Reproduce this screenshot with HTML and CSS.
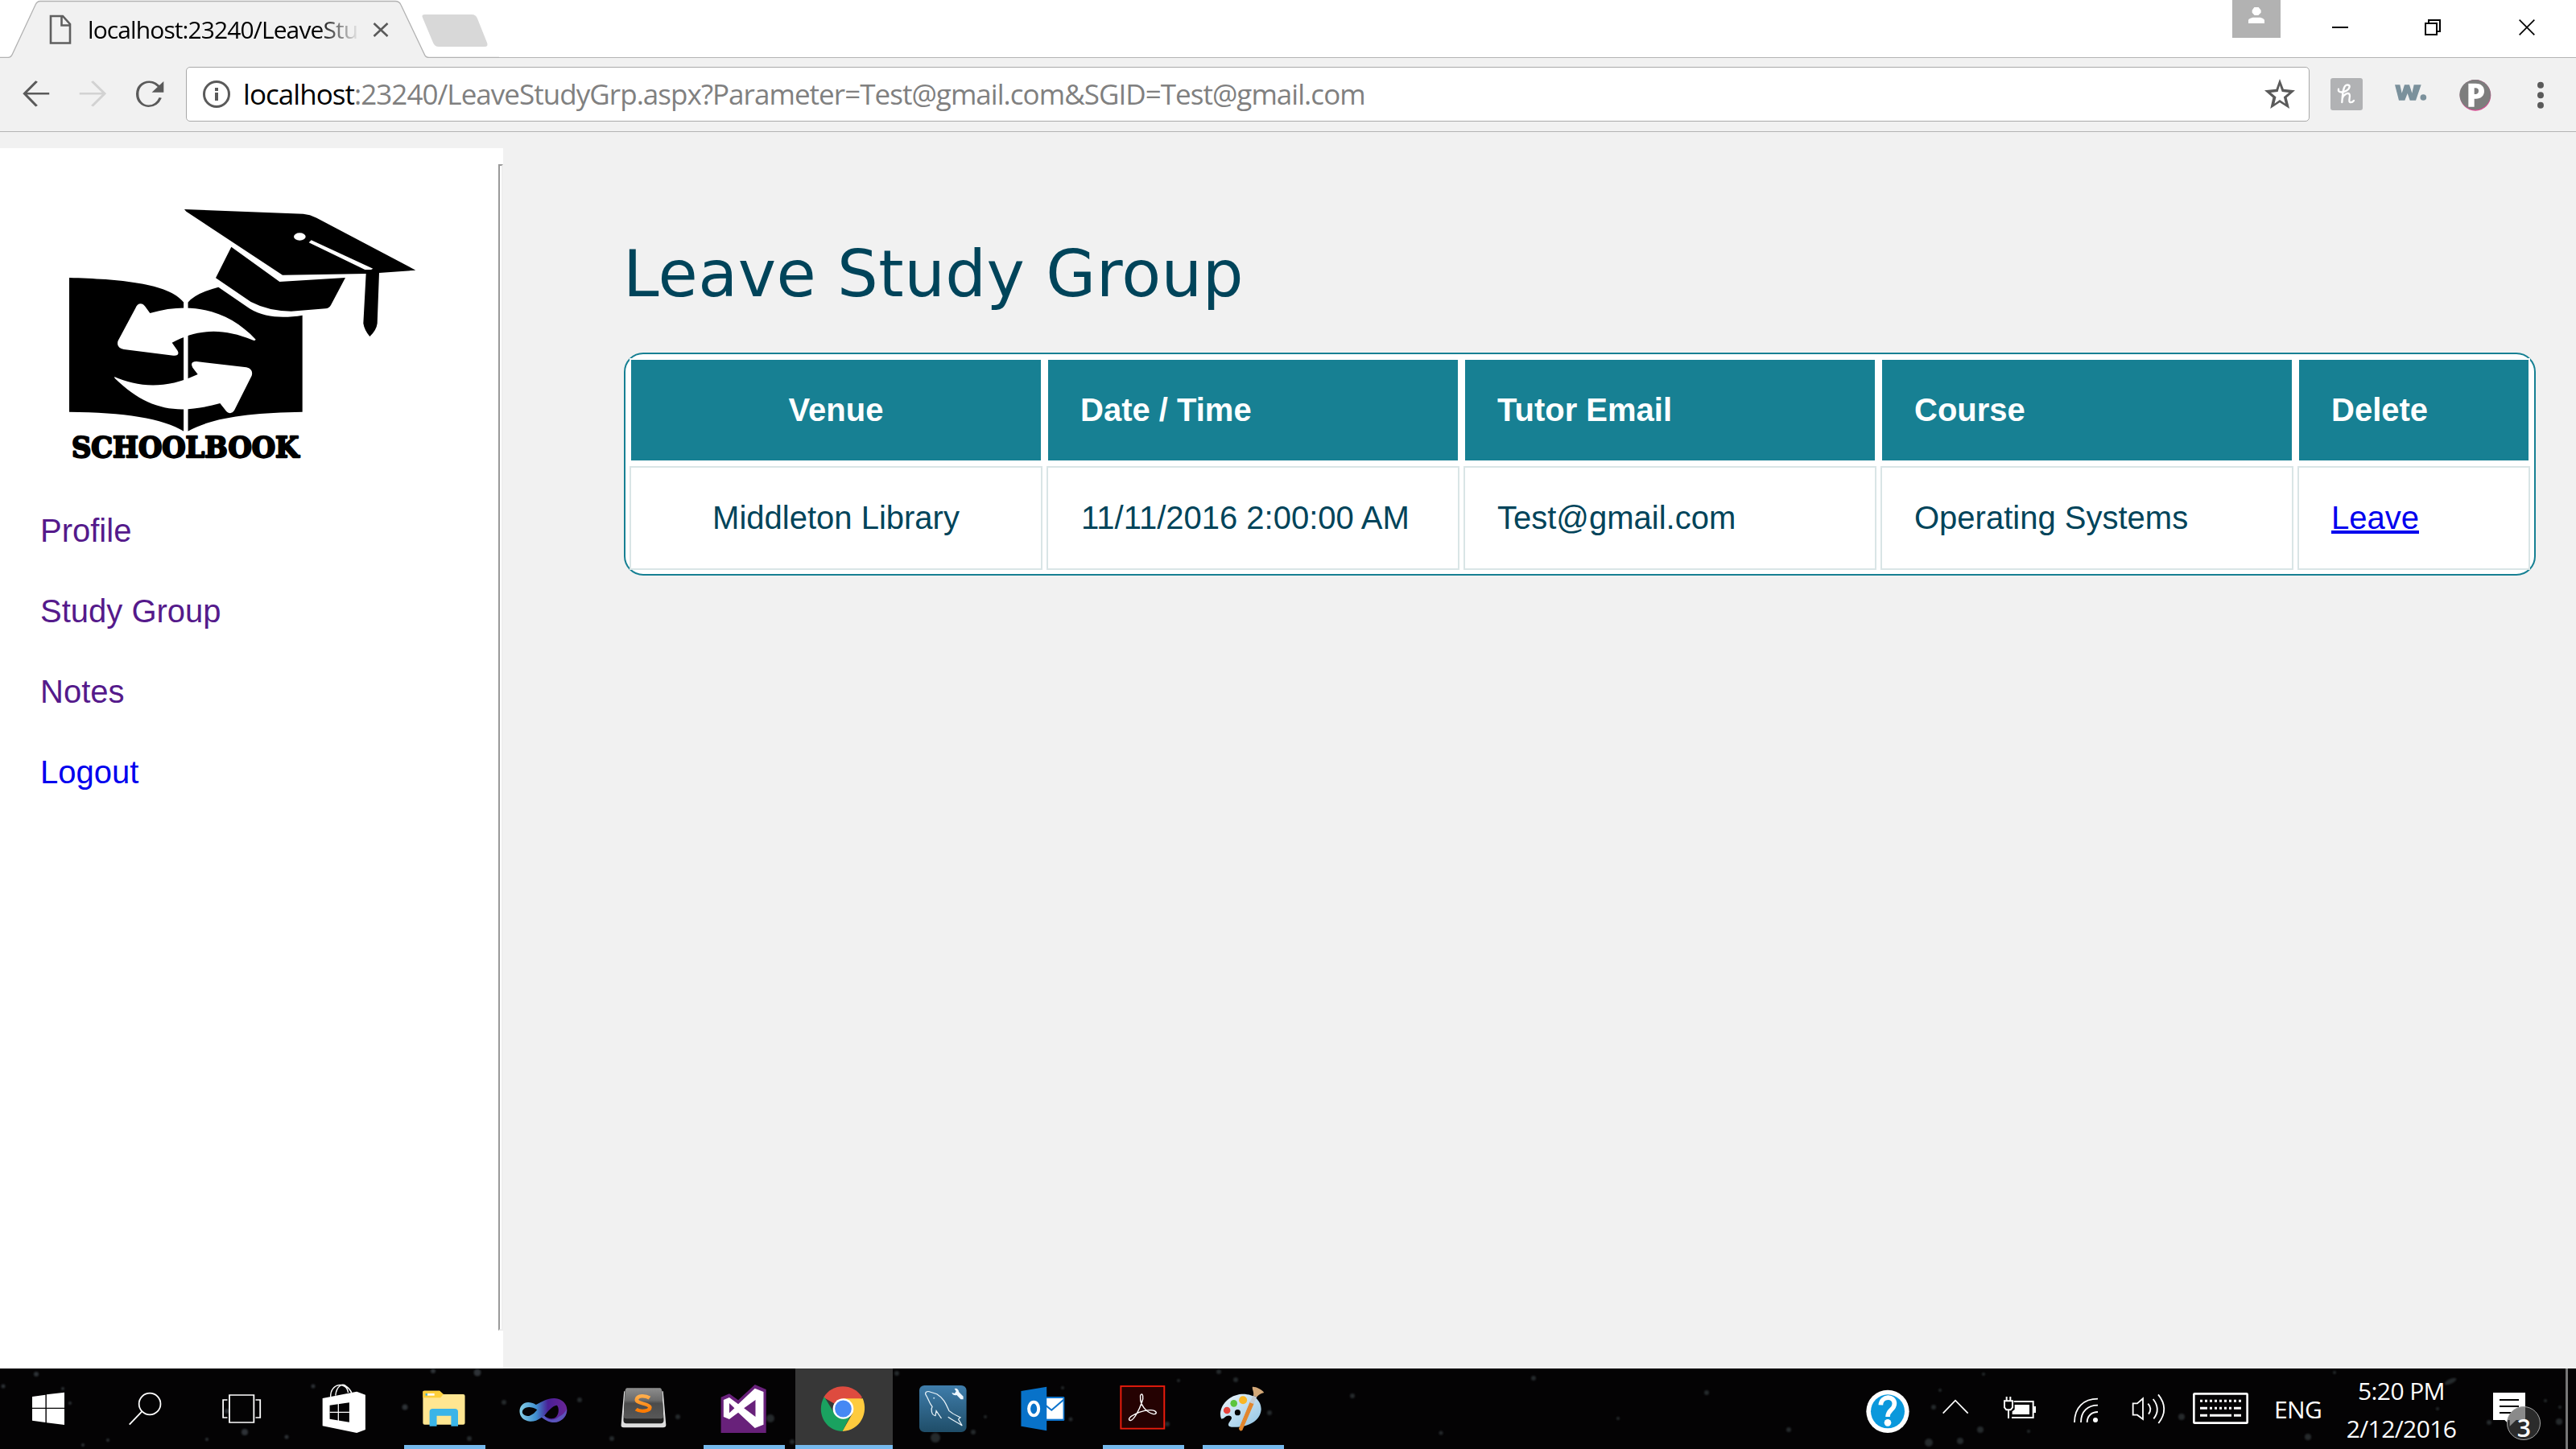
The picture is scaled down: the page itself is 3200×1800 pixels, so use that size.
FILE: index.html
```html
<!DOCTYPE html>
<html lang="en">
<head>
<meta charset="utf-8">
<title>Leave Study Group</title>
<link rel="stylesheet" href="styles.css">
</head>
<body>
<header class="tabstrip">
  <svg class="tab-shape" width="620" height="72" viewBox="0 0 620 72">
    <path d="M0 71.5H10Q14 71.5 15 68L44 6Q46 1 50 1H491Q496 1 498 6L527 67Q529 71.5 533 71.5H620V72H0Z" fill="#f1f1f1"/>
    <path d="M0 71.5H10Q14 71 15.500 67L44 6Q46 1.500 50 1.500H491Q496 1.500 498 6L527 67Q528.500 71.500 533 71.500H620" fill="none" stroke="#b2b2b2" stroke-width="1.300"/>
    <path d="M528 18H586Q591 18 593 23L605 53Q607 58 602 58H545Q540 58 538 53L525 22Q523 18 528 18Z" fill="#d8d8d8"/>
  </svg>
  <div class="tab">
    <svg width="28" height="38" viewBox="0 0 28 38"><path d="M2 2H17L26 12V35.500H2Z M15.500 2V13.500H26" fill="none" stroke="#5f5f5f" stroke-width="2.600"/></svg>
    <span class="tab-title">localhost:23240/LeaveStu</span>
    <svg width="20" height="20" viewBox="0 0 20 20"><path d="M1.500 2L18.500 18M18.500 2L1.500 18" stroke="#5a5a5a" stroke-width="2.600"/></svg>
  </div>
  <svg class="window-controls" width="427" height="72" viewBox="0 0 1281 216">
    <path d="M0 0H180V141H0Z" fill="#b2b2b2"/>
    <path d="M82 27H98L107 38V47L97 57H83L74 47V38ZM60 87V75Q60 70 68 68L76 65H105L113 68Q120 71 120 76V87Z" fill="#fff"/>
    <g fill="none" stroke="#000" stroke-width="6"><path d="M372 102H432M720 87H762V129H720ZM732 87V75H774V117H762"/><path d="M1070 74L1126 130M1126 74L1070 130" stroke-width="5"/></g>
  </svg>
</header>

<div class="toolbar">
  <svg class="nav-icons" width="231" height="92" viewBox="0 216 517 276" preserveAspectRatio="none">
    <path d="M137 349H68M102 303L68 349L102 395" fill="none" stroke="#5a5a5a" stroke-width="7.500"/>
    <path d="M221 349H290M256 303L291 349L256 395" fill="none" stroke="#d2d2d2" stroke-width="7.500"/>
    <path d="M446 364C440 382 429 395 413 395C394 395 382 374 382 350C382 325 395 305 415 305C430 305 439 316 447 331" fill="none" stroke="#5a5a5a" stroke-width="7.500"/>
    <path d="M455 303V344H422Z" fill="#5a5a5a"/>
  </svg>
  <div class="omnibox">
    <svg width="36" height="36" viewBox="0 0 36 36"><circle cx="18" cy="18" r="15.500" fill="none" stroke="#5a5a5a" stroke-width="3"/><path d="M16 10h4v4h-4zM16 16h4v10h-4z" fill="#5a5a5a"/></svg>
    <span class="url"><b>localhost</b>:23240/LeaveStudyGrp.aspx?Parameter=Test@gmail.com&amp;SGID=Test@gmail.com</span>
    <svg width="38" height="38" viewBox="344 296 110 110"><path fill-rule="evenodd" fill="#5a5a5a" d="M399 296L413 333L454 337L424 363L434 403L399 381L365 403L374 363L344 337L386 333ZM399 319L392 342L367 345L386 361L380 385L399 371L419 385L413 361L432 345L407 342Z"/></svg>
  </div>
  <svg class="extensions" width="331" height="92" viewBox="507 216 993 276">
    <rect x="585" y="291" width="120" height="120" rx="9" fill="#b1b2b4"/>
    <path d="M615 332C612 346 630 346 644 338C660 328 660 314 645 317C632 320 630 350 628 381M629 368C636 348 652 344 656 352C660 360 650 378 658 381Q666 383 672 375" fill="none" stroke="#fff" stroke-width="7" stroke-linecap="round"/>
    <path d="M825 316H844L851 347L861 316H879L889 347L896 316H923L903 374H881L872 348L862 374H840Z" fill="#7b919c"/><circle cx="931" cy="363" r="11.500" fill="#7b919c"/>
    <circle cx="1125" cy="355" r="58" fill="#d64f93"/><ellipse cx="1124" cy="353" rx="58" ry="56" fill="#7d7d7d"/>
    <path fill-rule="evenodd" d="M1099 311H1126C1145 311 1158 321 1158 339C1158 357 1146 368 1127 368H1121V398H1099ZM1121 328V351H1127Q1137 350 1137 339Q1137 328 1126 328Z" fill="#fff"/>
    <g fill="#5a5a5a"><circle cx="1368" cy="317" r="12"/><circle cx="1368" cy="355" r="12"/><circle cx="1368" cy="392" r="12"/></g>
  </svg>
</div>

<main class="page">
  <aside class="sidebar">
    <div class="sidebar-body">
      <svg class="logo" width="480" height="360" viewBox="0 0 1440 1080">
        <path d="M507 90L950 107Q975 109 1000 122L1369 317L1233 327L1226 515Q1223 540 1198 564Q1178 540 1174 515L1184 330L873 335L514 98Z"/>
        <ellipse cx="937" cy="192" rx="22" ry="14" fill="#fff"/>
        <path d="M980 205L1210 311L1203 315H1180L971 214Z" fill="#fff"/>
        <path d="M682 230L862 360L1107 345L1053 447Q1047 459 1033 460L905 470Q820 469 755 435L624 346Z"/>
        <path d="M78 345C260 350 450 365 505 437V917C430 870 280 846 78 845Z"/>
        <path d="M520 437Q550 402 634 380L750 460C810 496 880 496 947 485V845C760 849 620 862 520 917Z"/>
        <path d="M325 458C333 438 350 437 361 452L379 477C540 430 675 470 773 575C770 580 766 579 760 577C650 532 560 535 461 587L481 616C490 630 480 637 466 635L282 612C263 609 254 596 260 580Z" fill="#fff"/>
        <path d="M246 714C330 750 430 765 557 705L538 680C530 665 535 657 552 657L738 679C755 682 763 695 758 710L694 838C685 853 672 852 663 842L640 813C480 858 370 838 248 720Z" fill="#fff"/>
        <path d="M505 430H520V920H505Z" fill="#fff"/>
        <text class="logo-text" x="87" y="1015" textLength="847" lengthAdjust="spacingAndGlyphs">SCHOOLBOOK</text>
      </svg>
      <nav class="menu">
        <a class="visited">Profile</a>
        <a class="visited">Study Group</a>
        <a class="visited">Notes</a>
        <a>Logout</a>
      </nav>
    </div>
    <div class="divider"></div>
  </aside>
  <section class="content">
    <h1>Leave Study Group</h1>
    <table class="groups">
      <colgroup><col class="wide"><col class="wide"><col class="wide"><col class="wide"><col></colgroup>
      <tr><th class="center">Venue</th><th>Date / Time</th><th>Tutor Email</th><th>Course</th><th>Delete</th></tr>
      <tr><td class="center">Middleton Library</td><td class="date-cell">11/11/2016 2:00:00 AM</td><td>Test@gmail.com</td><td>Operating Systems</td><td><a class="leave">Leave</a></td></tr>
    </table>
  </section>
</main>

<footer class="taskbar">
  <svg class="stars" width="3200" height="100" viewBox="0 0 3200 100">
    <g fill="#6f7c84">
      <g opacity=".4"><circle cx="45" cy="7" r="3"/><circle cx="4" cy="22" r="2.500"/><circle cx="78" cy="25" r="2"/><circle cx="87" cy="43" r="2"/><circle cx="304" cy="79" r="4"/><circle cx="356" cy="85" r="2.500"/><circle cx="389" cy="22" r="2.500"/><circle cx="503" cy="48" r="3.500"/><circle cx="538" cy="3" r="3"/><circle cx="593" cy="5" r="4.500"/><circle cx="134" cy="89" r="2"/><circle cx="257" cy="88" r="2"/><circle cx="103" cy="95" r="2"/><circle cx="282" cy="53" r="3"/></g>
      <g opacity=".32"><circle cx="720" cy="39" r="3"/><circle cx="626" cy="42" r="3"/><circle cx="760" cy="87" r="3"/><circle cx="842" cy="60" r="3"/><circle cx="957" cy="62" r="5"/><circle cx="984" cy="91" r="3"/><circle cx="583" cy="87" r="3"/><circle cx="1162" cy="86" r="6"/><circle cx="1209" cy="79" r="3"/><circle cx="1114" cy="6" r="3"/><circle cx="1224" cy="60" r="2"/><circle cx="1330" cy="63" r="2.500"/><circle cx="1450" cy="69" r="3"/><circle cx="1464" cy="15" r="2"/><circle cx="1535" cy="14" r="3"/><circle cx="1514" cy="4" r="3"/><circle cx="1577" cy="55" r="3"/><circle cx="1320" cy="24" r="2"/></g>
      <g opacity=".32"><circle cx="1680" cy="34" r="3"/><circle cx="1790" cy="80" r="2.500"/><circle cx="1905" cy="12" r="3"/><circle cx="2010" cy="62" r="2"/><circle cx="2120" cy="30" r="3"/><circle cx="2222" cy="76" r="3"/><circle cx="2402" cy="48" r="3"/><circle cx="2410" cy="27" r="2"/><circle cx="2396" cy="92" r="5"/><circle cx="2435" cy="90" r="4"/><circle cx="2460" cy="76" r="4"/><circle cx="2520" cy="78" r="2"/><circle cx="2464" cy="7" r="2"/><circle cx="2710" cy="60" r="4"/><circle cx="2867" cy="85" r="4"/><circle cx="2900" cy="5" r="2"/><circle cx="3028" cy="50" r="2"/><ellipse cx="3044" cy="16" rx="8" ry="3" transform="rotate(-25 3044 16)"/><circle cx="3092" cy="67" r="3"/><circle cx="3179" cy="66" r="4"/><circle cx="3180" cy="48" r="2"/><circle cx="3162" cy="40" r="2"/></g>
    </g>
  </svg>

  <div class="system">
    <svg viewBox="0 30 336 300" preserveAspectRatio="none"><path d="M112 135L158 128V176H112ZM162 127L224 119V176H162ZM112 180H158V231L112 224ZM162 180H224V240L162 232Z" fill="#fff"/></svg>
    <svg viewBox="336 30 336 300" preserveAspectRatio="none"><ellipse cx="521" cy="162" rx="37.500" ry="40" fill="none" stroke="#fff" stroke-width="5"/><path d="M493 191L450 239" stroke="#fff" stroke-width="5"/></svg>
    <svg viewBox="672 30 336 300" preserveAspectRatio="none"><path d="M798 129H883V231H798ZM791 147H776V213H791M889 147H905V213H889" fill="none" stroke="#fff" stroke-width="5"/></svg>
  </div>
  <div class="apps">
    <div class="app"><svg viewBox="1026 30 347 300" preserveAspectRatio="none"><path d="M1151 136C1150 82 1208 78 1212 120M1168 131C1172 92 1194 84 1206 97Q1219 106 1224 121" fill="none" stroke="#fff" stroke-width="4"/><path fill-rule="evenodd" fill="#fff" d="M1123 141L1242 116L1272 128V258L1242 270L1123 244ZM1148 167V218L1216 230V157Z"/><path d="M1148 193H1216M1178 160V226" stroke="#fff" stroke-width="3.500"/></svg></div>
    <div class="app open"><svg viewBox="-27 30 347 300" preserveAspectRatio="none"><path d="M72 117Q72 113 77 113H130L143 126H212Q218 126 218 132V233Q218 239 212 239H78Q72 239 72 233Z" fill="#ffe691"/><path d="M72 117Q72 113 77 113H130L143 126L133 139H72Z" fill="#fdcf3a"/><path d="M88 123H112V131H88Z" fill="#fff"/><path d="M81 123H87V131H81Z" fill="#3ab4e8"/><path d="M95 245V191Q95 180 106 180H183Q194 180 194 191V245H170V206H120V245Z" fill="#3ab4e8"/></svg></div>
    <div class="app"><svg viewBox="321 30 347 300" preserveAspectRatio="none"><defs><linearGradient id="inf1"><stop offset="0" stop-color="#86cfe6"/><stop offset=".35" stop-color="#3f8fd0"/><stop offset=".6" stop-color="#4a1f96"/><stop offset="1" stop-color="#6a2596"/></linearGradient></defs><path fill-rule="evenodd" fill="url(#inf1)" d="M409 188C411 160 435 146 466 165C490 152 505 140 531 141C558 143 574 162 574 186C573 214 550 230 529 231C512 231 500 222 486 212C470 224 458 228 445 227C423 224 409 210 409 188ZM421 184C412 198 428 210 444 206C455 202 463 194 470 184C452 172 432 170 421 184ZM495 206C508 216 524 222 537 209C547 196 546 176 539 167C521 170 509 188 495 206Z"/><path d="M495 206C505 222 530 226 545 210Q566 200 573 180C574 214 550 231 529 231C512 231 500 222 486 212Z" fill="#5b62c4" opacity=".8"/></svg></div>
    <div class="app"><svg viewBox="668 30 347 300" preserveAspectRatio="none"><defs><linearGradient id="key" x2="0" y2="1"><stop offset="0" stop-color="#8d8d8d"/><stop offset=".4" stop-color="#6b6b6b"/><stop offset=".5" stop-color="#4b4b4b"/><stop offset="1" stop-color="#585858"/></linearGradient><linearGradient id="sub" x2="0" y2="1"><stop offset="0" stop-color="#ffad4a"/><stop offset="1" stop-color="#ff7a00"/></linearGradient></defs><path d="M772 115H908L918 240Q918 250 908 250H771Q761 250 762 240Z" fill="#dedede"/><path d="M781 103H899Q903 105 904 113L910 222Q910 235 900 235H780Q770 235 770 222L775 113Q776 104 781 103Z" fill="#222"/><path d="M782 103H898Q903 105 904 113L909 208Q909 217 900 217H780Q771 217 771 208L776 113Q777 104 782 103Z" fill="url(#key)"/><path d="M861 140C846 130 819 129 816 145C813 162 860 160 862 175C862 190 828 193 814 182" fill="none" stroke="url(#sub)" stroke-width="13"/></svg></div>
    <div class="app open"><svg viewBox="1015 30 347 300" preserveAspectRatio="none"><path d="M1109 137L1138 124L1169 148L1227 90L1266 108V270H1109Z" fill="#68217a"/><path fill-rule="evenodd" fill="#fff" d="M1118 147L1138 138L1169 163L1227 104L1257 117V239L1227 252L1169 194L1138 219L1118 210ZM1138 159V196L1156 178ZM1229 147L1189 178L1229 210Z"/></svg></div>
    <div class="app open active"><svg viewBox="1362 30 347 300" preserveAspectRatio="none"><path d="M1534 180L1466 138C1495 83 1570 83 1600 138Z" fill="#de4b3f"/><path d="M1534 142H1602C1623 196 1593 262 1531 264L1566 198Z" fill="#fecb3e"/><path d="M1468 135L1505 200Q1530 225 1560 205L1531 264C1470 262 1438 192 1468 135Z" fill="#1aa260"/><ellipse cx="1534" cy="180" rx="36" ry="38" fill="#fff"/><ellipse cx="1534" cy="180" rx="29" ry="31.500" fill="#4688f4"/></svg></div>
    <div class="app"><svg viewBox="141.400 30 347.200 300" preserveAspectRatio="none"><defs><linearGradient id="my" x2="0" y2="1"><stop offset="0" stop-color="#3f7dab"/><stop offset="1" stop-color="#1f4d68"/></linearGradient></defs><rect x="231" y="93" width="164" height="174" rx="18" fill="url(#my)"/><path d="M308 216L290 188L287 206C272 204 271 180 276 172C263 155 261 138 253 127C250 118 259 112 270 118L292 125C318 142 325 166 334 187C348 201 360 205 374 212L367 219L380 243C360 228 345 222 331 211" fill="none" stroke="#e9f3f8" stroke-width="3.500"/><circle cx="282" cy="140" r="3" fill="#b8d4e4"/><path d="M353 105Q366 101 369 118L384 134V145H375L361 129Q348 132 344 120L354 123L359 115Z" fill="#eef7ff"/></svg></div>
    <div class="app"><svg viewBox="488.600 30 347.200 300" preserveAspectRatio="none"><path d="M670 135H732Q736 135 736 139V221Q736 225 732 225H670Z" fill="#0d74cd"/><path d="M672 141H731V218H672Z" fill="#fff"/><path d="M672 169L691 185L733 146" fill="none" stroke="#0d74cd" stroke-width="6"/><path d="M585 114L674 98V262L585 245Z" fill="#0872c9"/><ellipse cx="629" cy="180" rx="17" ry="25" fill="none" stroke="#fff" stroke-width="11"/></svg></div>
    <div class="app open"><svg viewBox="835.800 30 347.200 300" preserveAspectRatio="none"><rect x="932" y="96" width="151" height="158" fill="#250202" stroke="#ec1c0c" stroke-width="5.500"/><path d="M1001 128C1009 119 1011 140 1006 153C996 185 979 219 966 224C955 222 961 210 978 202C1000 189 1032 181 1048 187C1060 194 1055 202 1043 199C1020 192 999 166 1000 139Q999 130 1001 128Z" fill="none" stroke="#fff" stroke-width="4"/></svg></div>
    <div class="app open"><svg viewBox="1183 30 347.200 300" preserveAspectRatio="none"><defs><linearGradient id="pal" x2="1" y2="1"><stop offset="0" stop-color="#eff7fc"/><stop offset="1" stop-color="#8fc3e3"/></linearGradient></defs><path fill-rule="evenodd" d="M1281 217C1268 179 1302 129 1352 125C1397 123 1421 151 1420 183C1418 224 1375 252 1317 248C1302 246 1304 236 1313 224C1326 208 1307 199 1295 211Q1286 220 1281 217ZM1338 183A10 11 0 1 0 1338.100 205A10 11 0 1 0 1338 183Z" fill="url(#pal)"/><ellipse cx="1301" cy="186" rx="12" ry="13" fill="#e6433c"/><ellipse cx="1325" cy="160" rx="12" ry="13" fill="#5cc53d"/><ellipse cx="1357" cy="148" rx="14" ry="15" fill="#f9b624"/><path d="M1382 156L1393 161L1353 260Q1347 264 1344 254Z" fill="#e2862d" stroke="#e2862d" stroke-width="3"/><path d="M1380 157L1392 131L1405 135L1394 162Z" fill="#c5ccd2"/><path d="M1393 131C1396 116 1387 105 1390 98C1401 97 1423 107 1430 120Q1416 123 1405 136Z" fill="#d3a878"/></svg></div>
  </div>
  <div class="tray">
    <svg width="90" viewBox="60 30 270 300"><circle cx="195" cy="190" r="80" fill="#fff"/><circle cx="195" cy="190" r="63" fill="#0a98dc"/><path d="M169 166C171 130 221 130 220 162C219 185 195 183 195 210" fill="none" stroke="#fff" stroke-width="17"/><circle cx="195" cy="232" r="13" fill="#fff"/></svg>
    <svg width="78" viewBox="330 30 234 300"><path d="M401 197L447 149L494 197" fill="none" stroke="#fff" stroke-width="5"/></svg>
    <svg width="84" viewBox="564 30 252 300"><path d="M665 153H737V213H657M645 187V216M630 151H660V175L653 184H637L630 175ZM638 135V150M652 135V150" fill="none" stroke="#fff" stroke-width="6"/><path d="M668 165H723V201H659V190L668 183ZM738 171H747V195H738Z" fill="#fff"/></svg>
    <svg width="78" viewBox="816 30 234 300"><path d="M891 231C891 175 925 143 978 143M915 231C915 190 940 167 978 167M938 231C938 207 955 192 978 192" fill="none" stroke="#fff" stroke-width="5.500"/><circle cx="969" cy="222" r="9" fill="#fff"/></svg>
    <svg width="78" viewBox="1050 30 234 300"><path d="M1109 160H1125L1146 142V219L1125 203H1109ZM1165 161Q1182 180 1167 200M1184 144Q1214 182 1186 217M1203 127Q1246 180 1204 234" fill="none" stroke="#fff" stroke-width="5.500"/></svg>
    <svg width="102" viewBox="24 30 306 300"><rect x="76" y="124" width="199" height="109" rx="3" fill="none" stroke="#fff" stroke-width="8"/><path d="M99 151H252M135 178H216" fill="none" stroke="#fff" stroke-width="9" stroke-dasharray="9 9"/><path d="M99 178H126M225 178H252M99 205H126M135 205H216M225 205H252" stroke="#fff" stroke-width="9"/></svg>
    <span class="lang">ENG</span>
    <div class="clock"><span>5:20 PM</span><span class="date">2/12/2016</span></div>
    <div class="notices">
      <svg width="119" viewBox="1104 30 357 300"><path d="M1191 120H1311V222H1262V250L1234 222H1191Z" fill="#fff"/><path d="M1215 147H1287M1215 171H1287M1215 195H1287" stroke="#000" stroke-width="6"/><circle cx="1305" cy="234" r="61.500" fill="#2b2b2b"/><path d="M1311 173A62 62 0 0 0 1245 222H1253V245L1277 222H1311Z" fill="#8a8a8a"/><circle cx="1305" cy="234" r="61.500" fill="none" stroke="#a5a5a5" stroke-width="3"/></svg>
      <span class="count">3</span>
    </div>
    <div class="peek"></div>
  </div>
</footer>
</body>
</html>
```
FILE: styles.css
```css
* { box-sizing: border-box; }
body {
  margin: 0;
  width: 3200px;
  height: 1800px;
  overflow: hidden;
  display: flex;
  flex-direction: column;
  background: #f1f1f1;
  font-family: "Liberation Sans", Arial, sans-serif;
  font-size: 40px;
}
svg { display: block; flex: none; }

/* Browser chrome */
.tabstrip {
  position: relative;
  height: 72px;
  flex: none;
  display: flex;
  justify-content: space-between;
  background: #fff linear-gradient(#b4b4b4, #b4b4b4) 620px 71px / 100% 1px no-repeat;
}
.tab-shape { position: absolute; left: 0; top: 0; }
.tab {
  position: relative;
  display: flex;
  align-items: center;
  height: 72px;
  padding: 1px 0 0 61px;
}
.tab-title {
  width: 336px;
  margin: 0 18px 0 20px;
  white-space: nowrap;
  font: 30px/60px "Open Sans", sans-serif;
  letter-spacing: -0.9px;
  color: #000;
  -webkit-mask-image: linear-gradient(90deg, #000 285px, transparent 338px);
  mask-image: linear-gradient(90deg, #000 285px, transparent 338px);
}
.window-controls { position: relative; }
.toolbar {
  height: 92px;
  flex: none;
  display: flex;
  background: #f1f1f1;
  border-bottom: 1px solid #b4b4b4;
}
.omnibox {
  width: 2638px;
  height: 68px;
  margin-top: 11px;
  padding: 0 17px 0 19px;
  display: flex;
  align-items: center;
  background: #fff;
  border: 1px solid #a9a9a9;
  border-radius: 5px;
}
.url {
  flex: 1;
  padding-left: 15px;
  font: 35px/60px "Open Sans", sans-serif;
  letter-spacing: -0.96px;
  color: #808080;
  white-space: nowrap;
}
.url b { font-weight: 400; color: #000; }

/* Page */
.page {
  height: 1536px;
  flex: none;
  padding-top: 20px;
  display: flex;
}
.sidebar {
  width: 625px;
  flex: none;
  display: flex;
  padding-top: 20px;
  background: #fff;
}
.sidebar-body { width: 619px; padding-top: 26px; }
.logo { margin-left: 60px; }
.logo-text {
  font: bold 108px "DejaVu Serif", serif;
  stroke: #000;
  stroke-width: 7;
  stroke-linejoin: round;
}
.menu {
  display: flex;
  flex-direction: column;
  padding: 19px 0 0 50px;
}
.menu a { line-height: 100px; color: #0000ee; }
.menu a.visited { color: #551a8b; }
.divider {
  width: 6px;
  height: 1449px;
  border: 2px solid;
  border-color: #9a9a9a #eee #eee #9a9a9a;
}
.content { padding: 102px 0 0 150px; }
h1 {
  margin: 0 0 42px -1px;
  font: 80px/110px "DejaVu Sans", Verdana, sans-serif;
  letter-spacing: 0.45px;
  color: #00445a;
}
.groups {
  width: 2375px;
  table-layout: fixed;
  border: 2px solid #178093;
  border-radius: 24px;
  border-spacing: 5px;
  background: #fff;
  color: #00445a;
}
.groups .wide { width: 513px; }
.groups th, .groups td {
  height: 129px;
  padding: 0 40px;
  border: 2px solid #d9e5e6;
  text-align: left;
  white-space: nowrap;
}
.groups th {
  border-color: #fff;
  background: #178093;
  color: #fff;
}
.groups .center { text-align: center; }
.groups .date-cell { padding-left: 41px; }
.leave {
  color: #0000ee;
  text-decoration: underline;
  text-decoration-thickness: 4px;
  text-underline-offset: 2px;
}

/* Taskbar */
.taskbar {
  position: relative;
  height: 100px;
  flex: none;
  display: flex;
  background: #040304;
  color: #fff;
  font: 30px/47px "Open Sans", sans-serif;
  letter-spacing: -0.6px;
}
.stars { position: absolute; left: 0; top: 0; filter: blur(1.2px); }
.system, .apps, .tray { position: relative; display: flex; }
.system svg { width: 120px; height: 100px; }
.apps { padding-left: 6px; }
.app { width: 124px; height: 100px; position: relative; }
.app svg { position: relative; width: 124px; height: 100px; }
.app.open { background: linear-gradient(#76b9ed, #76b9ed) 12px 95px / 101px 5px no-repeat; }
.app.active {
  background:
    linear-gradient(#76b9ed, #76b9ed) 2px 95px / 121px 5px no-repeat,
    linear-gradient(#373737, #373737) 2px 0 / 121px 100px no-repeat;
}
.tray { margin-left: auto; align-items: center; }
.tray svg { height: 100px; }
.lang { width: 88px; padding-left: 15px; }
.clock {
  width: 170px;
  display: flex;
  flex-direction: column;
  align-items: center;
  padding-top: 2px;
}
.notices { position: relative; width: 119px; }
.count {
  position: absolute;
  left: 46px;
  top: 52px;
  width: 42px;
  line-height: 44px;
  text-align: center;
  font-weight: 600;
}
.peek { width: 3px; height: 100px; margin-right: 10px; background: #777; }
```
